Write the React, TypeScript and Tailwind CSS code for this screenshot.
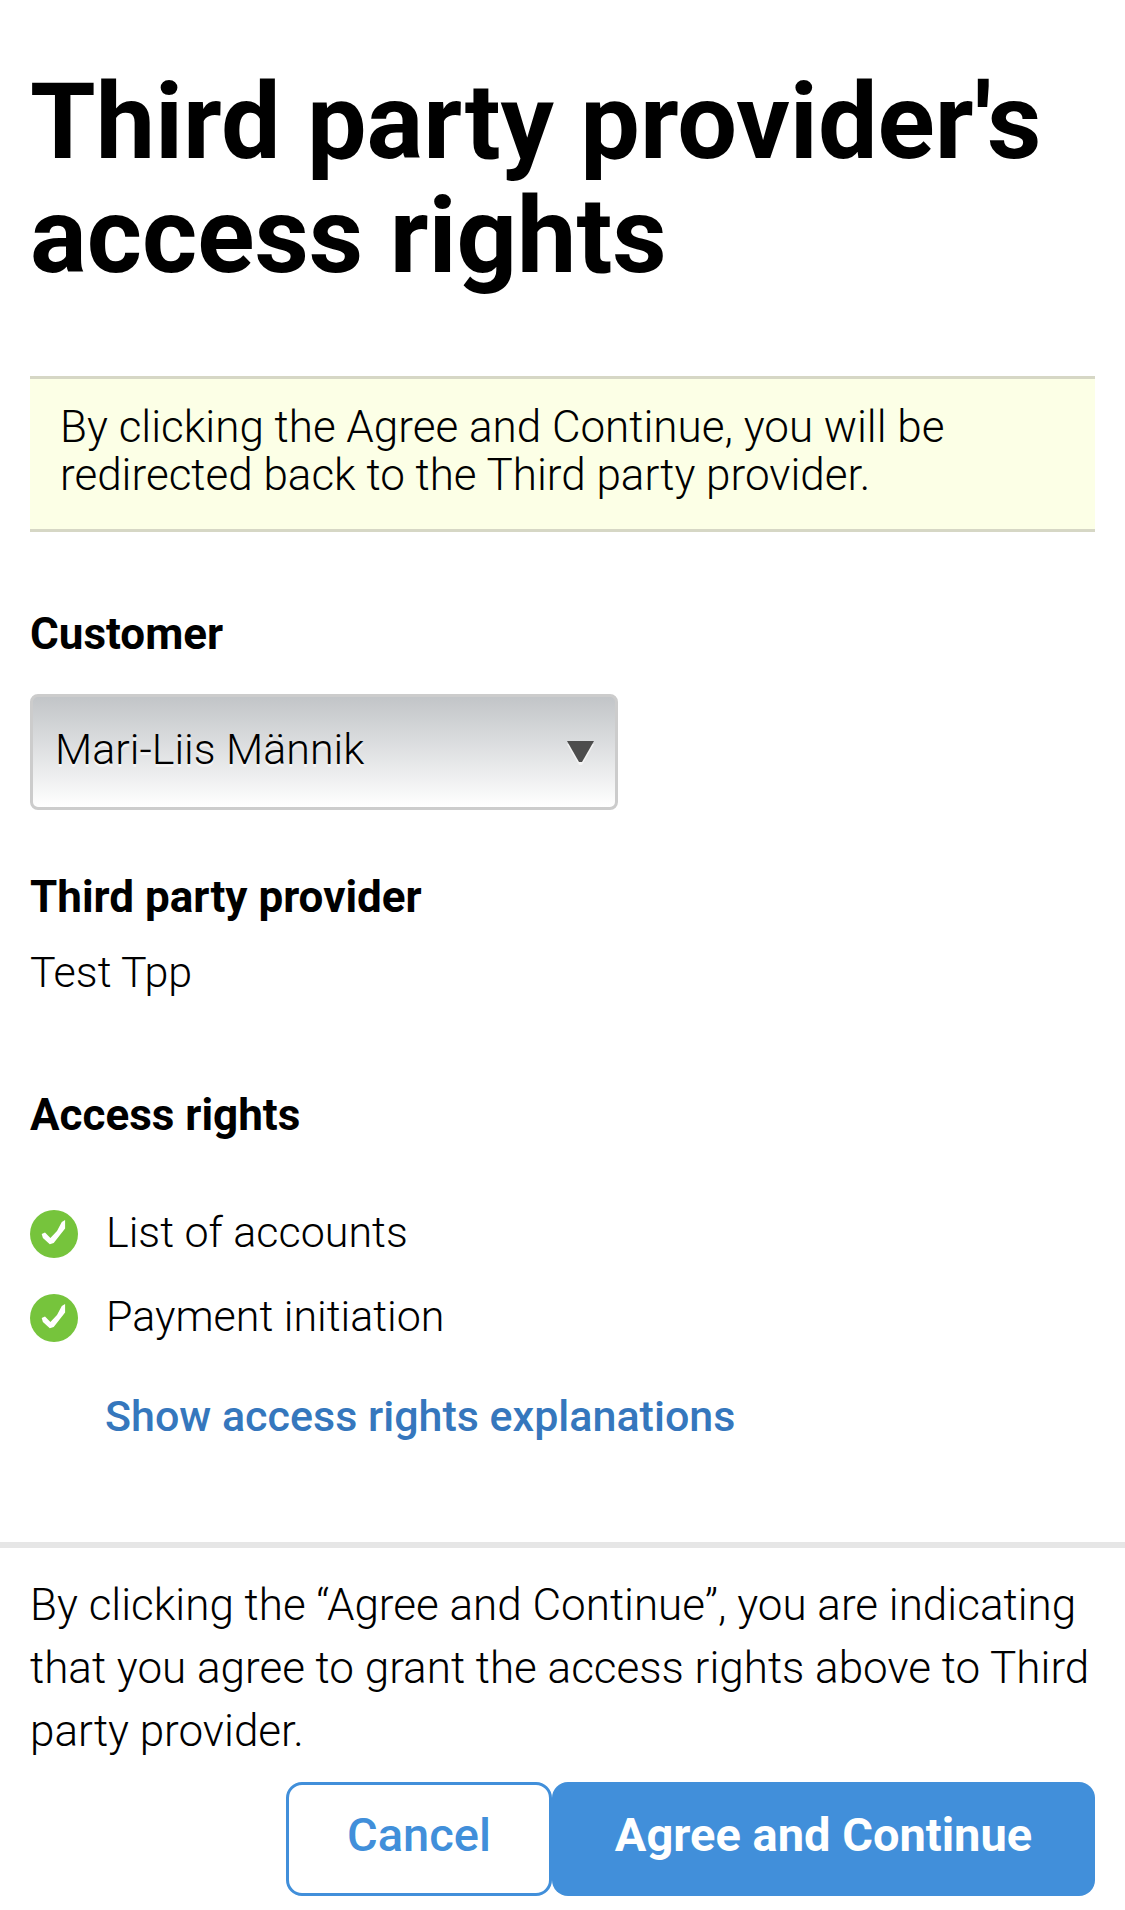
const rights = ["List of accounts", "Payment initiation"]

const CheckIcon = () => {
    return (
        <svg className="size-12 shrink-0" viewBox="0 0 16 16" aria-hidden="true">
            <circle cx="8" cy="8" r="8" fill="#76c43c" />
            <path d="M3.9 8 L5 7.5 L6.8 9.3 L9 7 L10.6 4 L11.7 3.3 V6.2 L9.8 8.6 L7.9 11 L6.6 11.4 L4.3 9.3Z" fill="#fff" />
        </svg>
    )
}

const App = () => {
    return (
        <div className="w-full bg-white font-[Roboto,sans-serif] text-[43px] leading-[48px] font-light text-black">
            <main className="px-[30px] pt-[65px] pb-[102px]">
                <h1 className="text-[106px] leading-[114px] font-bold">Third party provider's access rights</h1>

                <div className="mt-[83px] border-y-3 border-[#d6d7c5] bg-[#fcffe6] px-[30px] pt-6 pb-[30px]">
                    <p className="text-[44px] leading-[48px]">By clicking the Agree and Continue, you will be redirected back to the Third party provider.</p>
                </div>

                <label htmlFor="customer" className="mt-[78px] block text-[44px] leading-[48px] font-bold">Customer</label>
                <div className="relative mt-9 w-[588px] max-w-full">
                    <select
                        id="customer"
                        className="h-[116px] w-full appearance-none rounded-lg border-3 border-[#cccccc] bg-linear-to-b from-[#c2c5c8] to-white pr-20 pb-1.5 pl-[22px] font-light text-shadow-[0_3px_0_#f4f4f4]"
                    >
                        <option>Mari-Liis Männik</option>
                    </select>
                    <svg className="pointer-events-none absolute top-[47px] right-6 h-6 w-[27px]" viewBox="0 0 27 24" aria-hidden="true">
                        <path d="M0 3 H27 L15 24 H12Z" fill="#f4f4f4" />
                        <path d="M0 0 H27 L15 21 H12Z" fill="#4d4d4d" />
                    </svg>
                </div>

                <h2 className="mt-[63px] text-[44px] leading-[48px] font-bold">Third party provider</h2>
                <p className="mt-[27px]">Test Tpp</p>

                <h2 className="mt-[95px] text-[44px] leading-[48px] font-bold">Access rights</h2>
                <ul className="mt-[71px] flex flex-col gap-9">
                    {rights.map((right) => (
                        <li key={right} className="flex items-center gap-7">
                            <CheckIcon />
                            <span className="-mt-1">{right}</span>
                        </li>
                    ))}
                </ul>
                <a href="#explanations" className="mt-[50px] ml-[75px] block font-medium text-[#3577bd]">Show access rights explanations</a>
            </main>

            <footer className="border-t-6 border-[#e6e6e6] px-[30px] pt-[26px] pb-[14px]">
                <p className="text-[44px] leading-[63px]">
                    By clicking the “Agree and Continue”, you are indicating that you agree to grant the access rights above to Third party provider.
                </p>
                <div className="mt-[19px] flex justify-end text-[47px]">
                    <button type="button" className="h-[114px] w-[266px] rounded-2xl border-3 border-[#418fda] pb-2 font-medium text-[#418fda]">Cancel</button>
                    <button type="button" className="h-[114px] w-[543px] rounded-2xl bg-[#418fda] pb-2 font-bold text-white">Agree and Continue</button>
                </div>
            </footer>
        </div>
    )
}

export default App
